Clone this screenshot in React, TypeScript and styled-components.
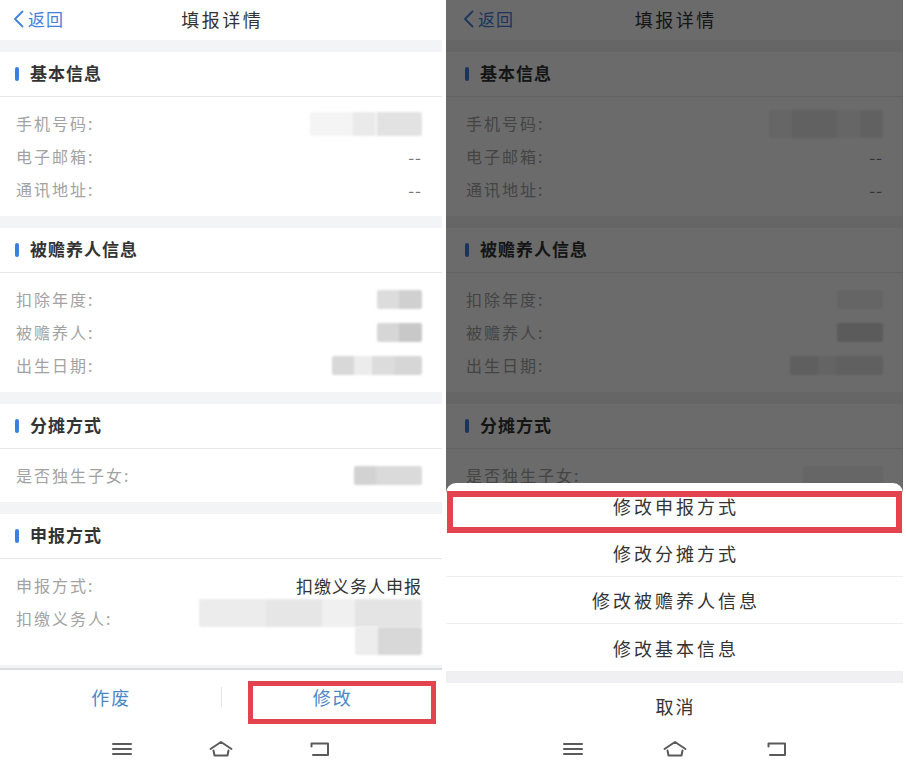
import React from 'react';
import styled, { createGlobalStyle } from 'styled-components';

const Global = createGlobalStyle`
  html, body { margin: 0; padding: 0; background: #fff; }
  body { font-family: "Noto Sans CJK SC", "Noto Sans", sans-serif; }
`;

const BLUE = '#3f82dc';
const RED = '#e2434e';

const Page = styled.div`
  display: flex;
  gap: 4px;
  height: 775px;
  overflow: hidden;
`;

const Phone = styled.div<{ $w: number }>`
  position: relative;
  width: ${p => p.$w}px;
  height: 775px;
  display: flex;
  flex-direction: column;
  background: #fff;
  overflow: hidden;
  flex: none;
`;

const Header = styled.div`
  height: 40px;
  flex: none;
  display: grid;
  grid-template-columns: 1fr auto 1fr;
  align-items: center;
  padding-bottom: 3px;
  box-sizing: border-box;
  background: #fff;
`;

const Back = styled.div<{ $padL: number }>`
  display: flex;
  align-items: center;
  gap: 4px;
  padding-left: ${p => p.$padL - 3}px;
  color: ${BLUE};
  font-size: 17px;
  letter-spacing: 1px;
`;

const Title = styled.div`
  font-size: 18px;
  letter-spacing: 2.5px;
  padding-left: 2.5px;
  color: #333;
`;

const Content = styled.div`
  flex: 1;
  min-height: 0;
  overflow: hidden;
  background: #f3f4f6;
`;

const Section = styled.section`
  margin-top: 12px;
  background: #fff;
`;

const SectionHead = styled.div<{ $padL: number }>`
  height: 45px;
  display: flex;
  align-items: center;
  gap: 11px;
  padding-left: ${p => p.$padL - 1}px;
  padding-bottom: 3px;
  box-sizing: border-box;
  border-bottom: 1px solid #e6e7ea;
  font-size: 17px;
  font-weight: 700;
  letter-spacing: 1px;
  color: #333;
`;

const Bar = styled.span`
  width: 4px;
  height: 14px;
  margin-top: 2px;
  border-radius: 2px;
  background: #3a7fe2;
`;

const SectionBody = styled.div<{ $padL: number }>`
  padding: 10px 20px 10px ${p => p.$padL}px;
`;

const Row = styled.div`
  min-height: 33px;
  display: flex;
  justify-content: space-between;
  align-items: center;
`;

const TallRow = styled(Row)`
  align-items: flex-start;
`;

const Label = styled.span`
  font-size: 16px;
  letter-spacing: 2px;
  line-height: 33px;
  color: #a2a2a2;
`;

const Value = styled.span<{ $dark?: boolean }>`
  font-size: 17px;
  letter-spacing: 1px;
  color: ${p => (p.$dark ? '#333' : '#777')};
`;

const BlurStack = styled.div`
  display: flex;
  flex-direction: column;
  align-items: flex-end;
  margin-top: -3px;
`;

const Redacted = styled.div<{ $w: number; $h: number; $bg: string }>`
  width: ${p => p.$w}px;
  height: ${p => p.$h}px;
  background: ${p => p.$bg};
  filter: blur(1.2px);
  border-radius: 2px;
`;

const ActionBar = styled.div`
  height: 54px;
  flex: none;
  display: flex;
  align-items: center;
  border-top: 2px solid #dcdcdc;
  background: #fff;
`;

const ActionButton = styled.div`
  position: relative;
  flex: 1;
  align-self: stretch;
  display: flex;
  align-items: center;
  justify-content: center;
  font-size: 18px;
  letter-spacing: 2px;
  padding-left: 2px;
  color: #4a88c8;
`;

const VDivider = styled.div`
  width: 1px;
  height: 20px;
  background: #e4e4e4;
`;

const Highlight = styled.div<{ $t: number; $b: number; $l: number; $r: number; $bw: number }>`
  position: absolute;
  top: ${p => p.$t}px;
  bottom: ${p => p.$b}px;
  left: ${p => p.$l}px;
  right: ${p => p.$r}px;
  border: ${p => p.$bw}px solid ${RED};
  pointer-events: none;
`;

const Nav = styled.div<{ $gap: number }>`
  height: 51px;
  flex: none;
  display: flex;
  justify-content: center;
  align-items: flex-start;
  padding-top: 16px;
  box-sizing: border-box;
  gap: ${p => p.$gap}px;
  background: #fff;
  position: relative;
  z-index: 5;
`;

const NavIcon = styled.svg`
  width: 24px;
  height: 18px;
  display: block;
`;

const Backdrop = styled.div`
  position: absolute;
  top: 0;
  left: 0;
  right: 0;
  bottom: 51px;
  background: rgba(0, 0, 0, 0.58);
  z-index: 2;
`;

const Sheet = styled.div`
  position: absolute;
  left: 0;
  right: 0;
  bottom: 46px;
  background: #fff;
  border-radius: 10px 10px 0 0;
  z-index: 6;
`;

const SheetItem = styled.div<{ $last?: boolean }>`
  position: relative;
  height: 47px;
  display: flex;
  align-items: center;
  justify-content: center;
  font-size: 18px;
  letter-spacing: 3px;
  padding-left: 3px;
  color: #333;
  border-bottom: ${p => (p.$last ? 'none' : '1px solid #eeeeee')};
  box-sizing: border-box;
`;

const SheetGap = styled.div`
  height: 12px;
  background: #f0f0f2;
`;

const CancelItem = styled.div`
  height: 46px;
  display: flex;
  align-items: center;
  justify-content: center;
  font-size: 18px;
  letter-spacing: 2px;
  padding-left: 2px;
  color: #333;
`;

type Blur = { w: number; h: number; bg: string };
type RowData = { label: string; value?: string; dark?: boolean; blur?: Blur; tall?: Blur[] };
type SectionData = { title: string; rows: RowData[] };

const leftSections: SectionData[] = [
  {
    title: '基本信息',
    rows: [
      { label: '手机号码:', blur: { w: 112, h: 24, bg: 'linear-gradient(90deg,#f4f4f4 0 38%,#eaeaea 38% 58%,#f6f6f6 58% 60%,#e2e2e2 60% 100%)' } },
      { label: '电子邮箱:', value: '--' },
      { label: '通讯地址:', value: '--' },
    ],
  },
  {
    title: '被赡养人信息',
    rows: [
      { label: '扣除年度:', blur: { w: 45, h: 19, bg: 'linear-gradient(90deg,#dcdcdc 0 50%,#d0d0d0 50%)' } },
      { label: '被赡养人:', blur: { w: 45, h: 19, bg: 'linear-gradient(90deg,#d6d6d6 0 50%,#c8c8c8 50%)' } },
      { label: '出生日期:', blur: { w: 90, h: 19, bg: 'linear-gradient(90deg,#d8d8d8 0 25%,#ececec 25% 45%,#dcdcdc 45% 70%,#d6d6d6 70%)' } },
    ],
  },
  {
    title: '分摊方式',
    rows: [
      { label: '是否独生子女:', blur: { w: 68, h: 19, bg: 'linear-gradient(90deg,#d2d2d2 0 32%,#dadada 32%)' } },
    ],
  },
  {
    title: '申报方式',
    rows: [
      { label: '申报方式:', value: '扣缴义务人申报', dark: true },
      {
        label: '扣缴义务人:',
        tall: [
          { w: 223, h: 28, bg: 'linear-gradient(90deg,#ececec 0 30%,#e6e6e6 30% 55%,#f0f0f0 55% 70%,#e4e4e4 70%)' },
          { w: 67, h: 28, bg: 'linear-gradient(90deg,#ededed 0 35%,#d8d8d8 35%)' },
        ],
      },
    ],
  },
];

const rightSections: SectionData[] = [
  {
    title: '基本信息',
    rows: [
      { label: '手机号码:', blur: { w: 114, h: 28, bg: 'linear-gradient(90deg,#f2f2f2 0 20%,#e6e6e6 20% 60%,#f4f4f4 60% 80%,#e8e8e8 80%)' } },
      { label: '电子邮箱:', value: '--' },
      { label: '通讯地址:', value: '--' },
    ],
  },
  {
    title: '被赡养人信息',
    rows: [
      { label: '扣除年度:', blur: { w: 46, h: 19, bg: '#f0f0f0' } },
      { label: '被赡养人:', blur: { w: 46, h: 19, bg: '#d8d8d8' } },
      { label: '出生日期:', blur: { w: 93, h: 19, bg: 'linear-gradient(90deg,#e2e2e2 0 30%,#eeeeee 30% 50%,#e4e4e4 50%)' } },
    ],
  },
  {
    title: '分摊方式',
    rows: [{ label: '是否独生子女:', blur: { w: 80, h: 19, bg: '#f2f2f2' } }],
  },
  {
    title: '申报方式',
    rows: [
      { label: '申报方式:', value: '扣缴义务人申报', dark: true },
      { label: '扣缴义务人:', blur: { w: 200, h: 26, bg: '#eeeeee' } },
    ],
  },
];

const Chevron = () => (
  <svg width="11" height="18" viewBox="0 0 11 18">
    <polyline points="9.5,1.5 2,9 9.5,16.5" fill="none" stroke={BLUE} strokeWidth="1.8" strokeLinecap="round" strokeLinejoin="round" />
  </svg>
);

const MenuIcon = () => (
  <NavIcon viewBox="0 0 24 18">
    <g stroke="#5a5a5a" strokeWidth="2" strokeLinecap="round">
      <line x1="3" y1="4" x2="21" y2="4" />
      <line x1="3" y1="9" x2="21" y2="9" />
      <line x1="3" y1="14" x2="21" y2="14" />
    </g>
  </NavIcon>
);

const HomeIcon = () => (
  <NavIcon viewBox="0 0 24 18">
    <path d="M1.5 9 L12 2 L22.5 9 M4.5 10.5 L5.5 15.5 H18.5 L19.5 10.5" fill="none" stroke="#5a5a5a" strokeWidth="2" strokeLinecap="round" strokeLinejoin="round" />
  </NavIcon>
);

const BackIcon = () => (
  <NavIcon viewBox="0 0 24 18">
    <path d="M3.5 6.5 V3.5 H20 V15 H5" fill="none" stroke="#5a5a5a" strokeWidth="2" strokeLinecap="round" strokeLinejoin="round" />
  </NavIcon>
);

const RowView = ({ r }: { r: RowData }) => {
  if (r.tall) {
    return (
      <TallRow>
        <Label>{r.label}</Label>
        <BlurStack>
          {r.tall.map((b, i) => (
            <Redacted key={i} $w={b.w} $h={b.h} $bg={b.bg} />
          ))}
        </BlurStack>
      </TallRow>
    );
  }
  return (
    <Row>
      <Label>{r.label}</Label>
      {r.blur ? <Redacted $w={r.blur.w} $h={r.blur.h} $bg={r.blur.bg} /> : <Value $dark={r.dark}>{r.value}</Value>}
    </Row>
  );
};

const Screen = ({ sections, padL }: { sections: SectionData[]; padL: number }) => (
  <>
    <Header>
      <Back $padL={padL}>
        <Chevron />
        返回
      </Back>
      <Title>填报详情</Title>
      <span />
    </Header>
    <Content>
      {sections.map(s => (
        <Section key={s.title}>
          <SectionHead $padL={padL}>
            <Bar />
            {s.title}
          </SectionHead>
          <SectionBody $padL={padL}>
            {s.rows.map(r => (
              <RowView key={r.label} r={r} />
            ))}
          </SectionBody>
        </Section>
      ))}
    </Content>
  </>
);

const NavBar = ({ gap }: { gap: number }) => (
  <Nav $gap={gap}>
    <MenuIcon />
    <HomeIcon />
    <BackIcon />
  </Nav>
);

export default function App() {
  return (
    <>
      <Global />
      <Page>
        <Phone $w={442}>
          <Screen sections={leftSections} padL={16} />
          <ActionBar>
            <ActionButton>作废</ActionButton>
            <VDivider />
            <ActionButton>
              修改
              <Highlight $t={11} $b={0} $l={26} $r={6} $bw={5} />
            </ActionButton>
          </ActionBar>
          <NavBar gap={75} />
        </Phone>

        <Phone $w={457}>
          <Screen sections={rightSections} padL={20} />
          <ActionBar>
            <ActionButton>作废</ActionButton>
            <VDivider />
            <ActionButton>修改</ActionButton>
          </ActionBar>
          <NavBar gap={78} />
          <Backdrop />
          <Sheet>
            <SheetItem>
              修改申报方式
              <Highlight $t={8} $b={-4} $l={1} $r={1} $bw={6} />
            </SheetItem>
            <SheetItem>修改分摊方式</SheetItem>
            <SheetItem>修改被赡养人信息</SheetItem>
            <SheetItem $last>修改基本信息</SheetItem>
            <SheetGap />
            <CancelItem>取消</CancelItem>
          </Sheet>
        </Phone>
      </Page>
    </>
  );
}
